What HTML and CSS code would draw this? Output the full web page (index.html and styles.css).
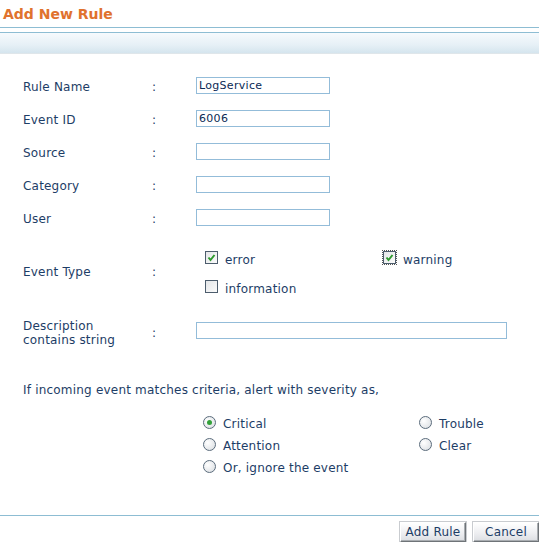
FILE: index.html
```html
<!DOCTYPE html>
<html>
<head>
<meta charset="utf-8">
<link rel="stylesheet" href="styles.css">
</head>
<body>
<div class="page">
  <div class="title">Add New Rule</div>
  <div class="rule-top"></div>
  <div class="band"></div>

  <div class="form">
    <div class="row">
      <div class="label">Rule Name</div><div class="colon">:</div>
      <div class="field"><div class="input short">LogService</div></div>
    </div>
    <div class="row">
      <div class="label">Event ID</div><div class="colon">:</div>
      <div class="field"><div class="input short">6006</div></div>
    </div>
    <div class="row">
      <div class="label">Source</div><div class="colon">:</div>
      <div class="field"><div class="input short"></div></div>
    </div>
    <div class="row">
      <div class="label">Category</div><div class="colon">:</div>
      <div class="field"><div class="input short"></div></div>
    </div>
    <div class="row">
      <div class="label">User</div><div class="colon">:</div>
      <div class="field"><div class="input short"></div></div>
    </div>

    <div class="row types">
      <div class="label">Event Type</div><div class="colon">:</div>
      <div class="field checks">
        <div class="check"><span class="box"><svg width="11" height="11" viewBox="0 0 11 11"><path d="M2.5 5.5 L4.5 8 L8.5 3" fill="none" stroke="#2e9a2e" stroke-width="2"/></svg></span><span class="ctext">error</span></div>
        <div class="check"><span class="box focus"><svg width="11" height="11" viewBox="0 0 11 11"><path d="M2.5 5.5 L4.5 8 L8.5 3" fill="none" stroke="#2e9a2e" stroke-width="2"/></svg></span><span class="ctext">warning</span></div>
        <div class="check"><span class="box"></span><span class="ctext">information</span></div>
      </div>
    </div>

    <div class="row desc">
      <div class="label">Description<br>contains string</div><div class="colon">:</div>
      <div class="field"><div class="input long"></div></div>
    </div>
  </div>

  <div class="prompt">If incoming event matches criteria, alert with severity as,</div>

  <div class="radios">
    <div class="radio"><span class="dot on"></span><span class="rtext">Critical</span></div>
    <div class="radio"><span class="dot"></span><span class="rtext">Trouble</span></div>
    <div class="radio"><span class="dot"></span><span class="rtext">Attention</span></div>
    <div class="radio"><span class="dot"></span><span class="rtext">Clear</span></div>
    <div class="radio"><span class="dot"></span><span class="rtext">Or, ignore the event</span></div>
  </div>

  <div class="footer">
    <button class="btn add">Add Rule</button>
    <button class="btn cancel">Cancel</button>
  </div>
</div>
</body>
</html>
```

FILE: styles.css
```css
html, body {
  margin: 0;
  padding: 0;
  background: #ffffff;
}
body {
  font-family: "DejaVu Sans", Verdana, sans-serif;
  font-size: 12px;
  letter-spacing: 0.2px;
  color: #1d3d66;
  overflow: hidden;
}
.page {
  width: 539px;
  height: 542px;
  display: flex;
  flex-direction: column;
}
.title {
  height: 27px;
  box-sizing: border-box;
  padding: 6px 0 0 3px;
  font-size: 14px;
  letter-spacing: 0;
  font-weight: bold;
  color: #e0722e;
  line-height: 16px;
}
.rule-top {
  height: 1px;
  background: #8dbdd3;
  margin-bottom: 4px;
}
.band {
  height: 20px;
  border-top: 1px solid #8dbdd3;
  border-bottom: 1px solid #dfe6ea;
  background: linear-gradient(#f6fafd, #e6f0f6 60%, #d5e5ee);
}
.form {
  margin-top: 16px;
  display: flex;
  flex-direction: column;
}
.row {
  display: grid;
  grid-template-columns: 129px 44px 1fr;
  padding-left: 23px;
  height: 33px;
  align-items: center;
}
.label { padding-top: 1px; }
.colon { padding-top: 0; }
.input {
  box-sizing: border-box;
  height: 17px;
  border: 1px solid #93bcd9;
  padding: 0 2px;
  line-height: 15px;
  color: #0b2a55;
  font-size: 11px;
  letter-spacing: 0.3px;
}
.input.short { width: 134px; margin-top: -2px; }
.input.long { width: 311px; margin-top: -3px; }
.row.types {
  height: 58px;
  margin-top: 10px;
}
.row.types .label,
.row.types .colon { padding-top: 0; padding-bottom: 4px; }
.checks {
  display: grid;
  grid-template-columns: 178px 1fr;
  grid-auto-rows: 29px;
  padding-left: 9px;
}
.check {
  display: flex;
  align-items: center;
  gap: 7px;
}
.box {
  box-sizing: border-box;
  width: 13px;
  height: 13px;
  border: 1px solid #4d5d6d;
  background: linear-gradient(135deg, #e4e6e8, #fbfbfb);
  display: flex;
  align-items: center;
  justify-content: center;
  margin-top: -5px;
}
.box svg { display: block; }
.box.focus {
  outline: 1px dotted #555;
  outline-offset: 0px;
}
.ctext { padding-top: 1px; }
.row.desc {
  height: 34px;
  margin-top: 12px;
  line-height: 14px;
}
.row.desc .colon { padding-top: 2px; }
.prompt {
  padding-left: 23px;
  margin-top: 34px;
  line-height: 14px;
}
.radios {
  margin-top: 15px;
  padding-left: 203px;
  display: grid;
  grid-template-columns: 216px 1fr;
  grid-auto-rows: 22px;
}
.radio {
  display: flex;
  align-items: center;
  gap: 7px;
}
.dot {
  box-sizing: border-box;
  width: 13px;
  height: 13px;
  border-radius: 50%;
  border: 1px solid #5b6c7c;
  background: radial-gradient(circle at 35% 35%, #ffffff, #e3e6e9 70%, #cfd4d8);
  display: flex;
  align-items: center;
  justify-content: center;
  margin-top: -2px;
}
.dot.on::after {
  content: "";
  width: 5px;
  height: 5px;
  border-radius: 50%;
  background: #33a13a;
}
.rtext { padding-top: 1px; }
.footer {
  margin-top: auto;
  border-top: 1px solid #8dbdd3;
  height: 26px;
  display: flex;
  justify-content: flex-end;
  align-items: flex-end;
  gap: 7px;
}
.btn {
  box-sizing: border-box;
  width: 66px;
  height: 20px;
  font-family: "DejaVu Sans", Verdana, sans-serif;
  font-size: 12px;
  letter-spacing: 0.2px;
  color: #1d3d66;
  background: linear-gradient(#ffffff, #ecedf0 60%, #dcdee2);
  border: 1px solid;
  border-color: #ffffff #6f7478 #6f7478 #ffffff;
  box-shadow: inset -1px -1px 0 #a9adb1;
  padding: 0;
  margin: 0;
  outline: 1px solid #c9ccd0;
}
```
